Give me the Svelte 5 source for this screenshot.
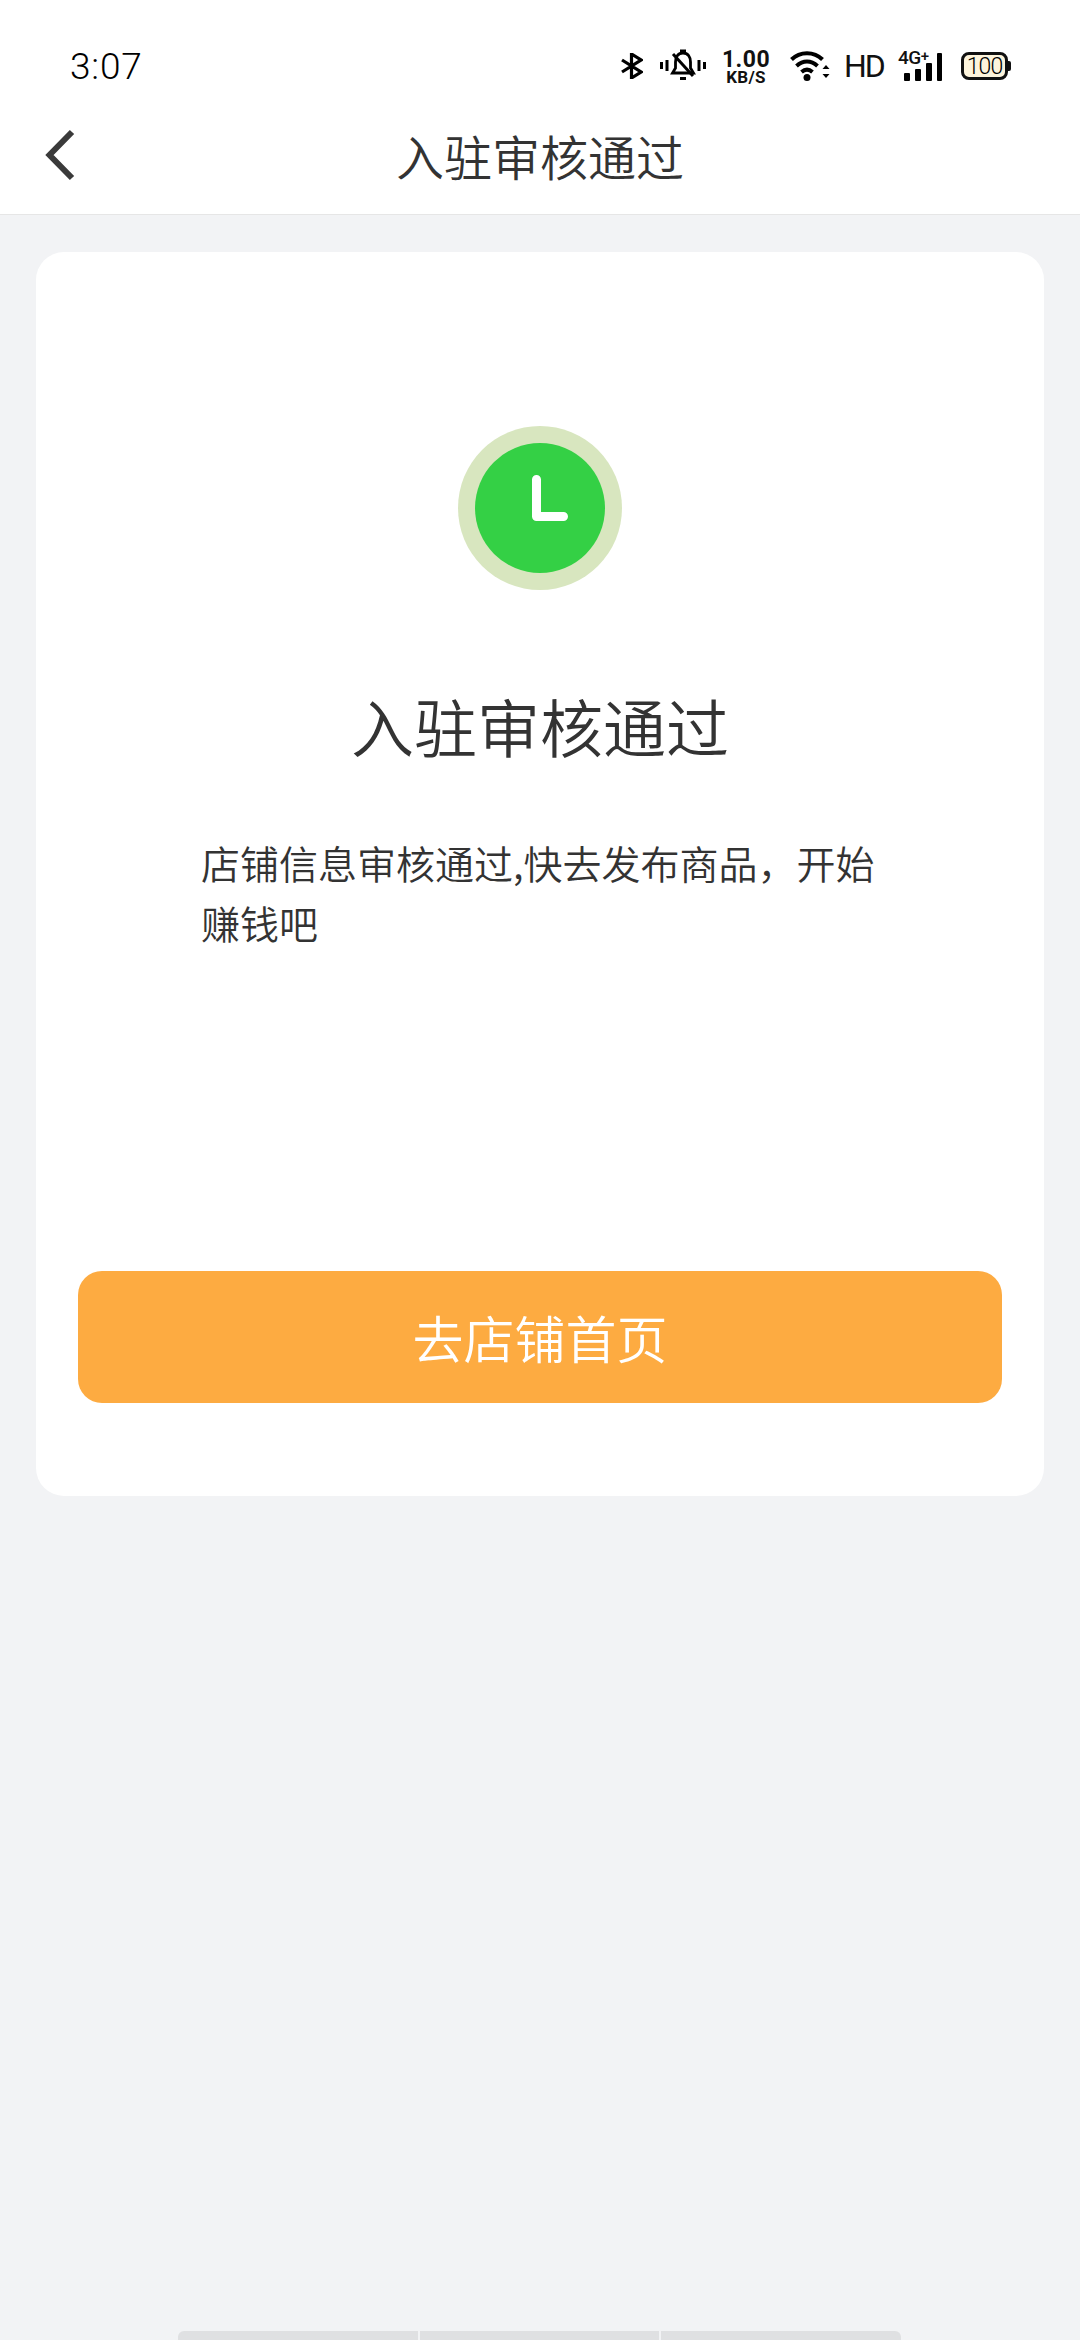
<script>
    let title = "入驻审核通过";
    let message = "店铺信息审核通过,快去发布商品，开始赚钱吧";
</script>

<div class="page">
    <div class="top">
        <div class="status">
            <span class="time">3:07</span>
            <div class="icons">
                <svg width="23" height="26" viewBox="0 0 23 26">
                    <path d="M2 7 L21 19 L11.500 25 V1 L21 7 L2 19" fill="none" stroke="#000" stroke-width="3.200" />
                </svg>
                <svg class="bell" width="46" height="34" viewBox="0 0 46 34">
                    <path d="M1.500 13v7M7 11v11M39 11v11M44.500 13v7" stroke="#000" stroke-width="3" fill="none" />
                    <path d="M23 4c-5 0-7.500 4-7.500 9v6l-3 5h21l-3-5v-6c0-5-2.500-9-7.500-9z" fill="none" stroke="#000" stroke-width="2.800" />
                    <path d="M20 2h6M20 29.500h6" stroke="#000" stroke-width="3" fill="none" />
                    <path d="M13 5l20 22" stroke="#000" stroke-width="3" fill="none" />
                </svg>
                <div class="speed">
                    <span class="num">1.00</span>
                    <span class="unit">KB/S</span>
                </div>
                <svg class="wifi" width="40" height="32" viewBox="0 0 40 32">
                    <path d="M1.500 9.500C10 1 24 1 32.500 9.500M6.500 16C13 10 21 10 27.500 16M11.500 22C15 19 19 19 22.500 22" fill="none" stroke="#000" stroke-width="4" />
                    <circle cx="17" cy="27.500" r="3.500" fill="#000" />
                    <path d="M32.500 19l3.500-4 3.500 4zM32.500 24l3.500 4 3.500-4z" fill="#000" />
                </svg>
                <span class="hd">HD</span>
                <div class="signal">
                    <span class="net">4G<sup>+</sup></span>
                    <i class="b1"></i><i class="b2"></i><i class="b3"></i><i class="b4"></i>
                </div>
                <div class="battery"><span>100</span></div>
            </div>
        </div>
        <div class="nav">
            <svg class="back" width="32" height="54" viewBox="0 0 32 54">
                <path d="M28 4 L5.500 27 L28 50" fill="none" stroke="#3a3a3a" stroke-width="6" />
            </svg>
            <h1>{title}</h1>
        </div>
    </div>

    <div class="card">
        <div class="ring">
            <div class="dot">
                <svg width="130" height="130" viewBox="0 0 130 130">
                    <path d="M61.500 36.500 V73.500 H88.500" fill="none" stroke="#fff" stroke-width="9" stroke-linecap="round" stroke-linejoin="round" />
                </svg>
            </div>
        </div>
        <h2>{title}</h2>
        <p>{message}</p>
        <button>去店铺首页</button>
    </div>

    <div class="home">
        <i></i><i></i><i></i>
    </div>
</div>

<style>
    :global(body) {
        margin: 0;
        background: #f2f3f5;
    }

    .page {
        position: relative;
        height: 2340px;
        overflow: hidden;
        font-family: "Noto Sans CJK SC", "Noto Sans", sans-serif;
        background: #f2f3f5;
    }

    .top {
        background: #fff;
        border-bottom: 1px solid #e6e6e6;
    }

    .status {
        height: 100px;
        padding: 32px 72px 0 70px;
        box-sizing: border-box;
        display: flex;
        align-items: center;
        justify-content: space-between;
    }

    .time {
        font-family: Roboto, sans-serif;
        font-size: 37px;
        font-weight: 300;
        color: #000;
        letter-spacing: 0.8px;
    }

    .icons {
        display: flex;
        align-items: center;
    }

    .bell {
        margin-left: 17px;
    }

    .speed {
        margin-left: 16px;
        width: 48px;
        display: flex;
        flex-direction: column;
        align-items: center;
        font-family: Roboto, sans-serif;
        font-weight: 700;
        color: #111;
    }

    .num {
        font-size: 23px;
        line-height: 21px;
        letter-spacing: 0.5px;
    }

    .unit {
        font-size: 17px;
        line-height: 14px;
        letter-spacing: 0.3px;
    }

    .wifi {
        margin-left: 20px;
    }

    .hd {
        margin-left: 14px;
        width: 36px;
        font-family: Roboto, sans-serif;
        font-size: 32px;
        letter-spacing: -2px;
        color: #111;
    }

    .signal {
        margin-left: 18px;
        width: 44px;
        height: 30px;
        position: relative;
    }

    .net {
        position: absolute;
        left: 0;
        top: -3px;
        font-family: Roboto, sans-serif;
        font-size: 19px;
        font-weight: 500;
        line-height: 20px;
        letter-spacing: -0.5px;
        color: #111;
    }

    .net sup {
        font-size: 15px;
        line-height: 0;
        vertical-align: 3px;
    }

    .signal i {
        position: absolute;
        bottom: 0;
        width: 5.500px;
        border-radius: 1px;
        background: #000;
    }

    .b1 {
        left: 6px;
        height: 8px;
    }

    .b2 {
        left: 17px;
        height: 12px;
    }

    .b3 {
        left: 28px;
        height: 18px;
    }

    .b4 {
        left: 38.500px;
        height: 28px;
    }

    .battery {
        margin-left: 19px;
        width: 47px;
        height: 28px;
        box-sizing: border-box;
        border: 3px solid #111;
        border-radius: 8px;
        background: #fdf4dc;
        position: relative;
        display: flex;
        align-items: center;
        justify-content: center;
    }

    .battery::after {
        content: "";
        position: absolute;
        right: -6px;
        top: 6px;
        width: 3px;
        height: 10px;
        background: #111;
        border-radius: 0 2px 2px 0;
    }

    .battery span {
        font-family: Roboto, sans-serif;
        font-size: 23px;
        font-weight: 300;
        line-height: 1;
        letter-spacing: -1px;
        color: #000;
    }

    .nav {
        height: 114px;
        padding-bottom: 5px;
        box-sizing: border-box;
        position: relative;
        display: flex;
        align-items: center;
        justify-content: center;
    }

    .back {
        position: absolute;
        left: 44px;
        top: 28px;
    }

    h1 {
        margin: 0;
        font-size: 48px;
        font-weight: 350;
        color: #333;
    }

    .card {
        margin: 37px 36px 0;
        height: 1244px;
        box-sizing: border-box;
        padding-top: 174px;
        background: #fff;
        border-radius: 28px;
        display: flex;
        flex-direction: column;
        align-items: center;
    }

    .ring {
        width: 164px;
        height: 164px;
        border-radius: 50%;
        background: #d8e6bf;
        display: flex;
        align-items: center;
        justify-content: center;
    }

    .dot {
        width: 130px;
        height: 130px;
        border-radius: 50%;
        background: #34d045;
        display: flex;
        align-items: center;
        justify-content: center;
    }

    h2 {
        margin: 89px 0 0;
        font-size: 63px;
        line-height: 92px;
        font-weight: 350;
        color: #333;
    }

    p {
        margin: 61px 0 0;
        width: 678px;
        font-size: 39px;
        font-weight: 350;
        line-height: 60px;
        color: #333;
    }

    button {
        margin-top: auto;
        margin-bottom: 93px;
        width: 924px;
        height: 132px;
        border: 0;
        border-radius: 24px;
        background: #fdab41;
        color: #fff;
        font-family: inherit;
        font-weight: 350;
        font-size: 51px;
    }

    .home {
        position: absolute;
        left: 178px;
        bottom: 0;
        width: 723px;
        height: 9px;
        display: flex;
        gap: 2px;
    }

    .home i {
        flex: 1;
        background: #dfe0e2;
    }

    .home i:first-child {
        border-radius: 6px 0 0 0;
    }

    .home i:last-child {
        border-radius: 0 6px 0 0;
    }
</style>
